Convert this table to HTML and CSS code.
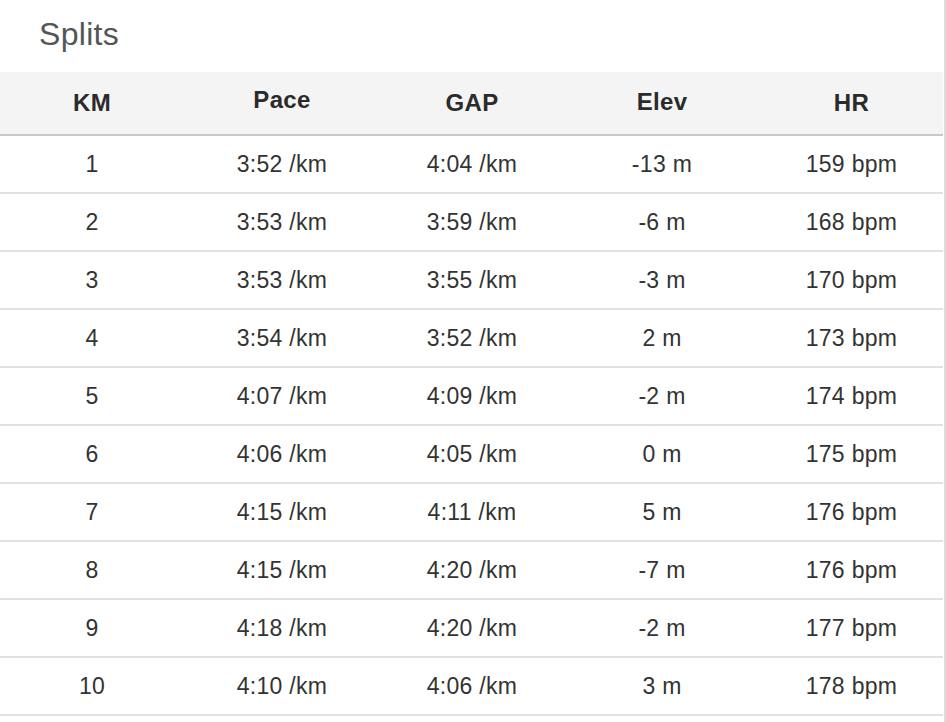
FILE: index.html
```html
<!DOCTYPE html>
<html>
<head>
<meta charset="utf-8">
<title>Splits</title>
<link rel="stylesheet" href="styles.css">
</head>
<body>
<div class="panel">
  <h2 class="title">Splits</h2>
  <table class="splits">
    <colgroup>
      <col class="c-km"><col class="c-pace"><col class="c-gap"><col class="c-elev"><col class="c-hr">
    </colgroup>
    <thead>
      <tr><th>KM</th><th><span class="lift">Pace</span></th><th>GAP</th><th><span class="lift-sm">Elev</span></th><th>HR</th></tr>
    </thead>
    <tbody>
      <tr><td>1</td><td>3:52 /km</td><td>4:04 /km</td><td>-13 m</td><td>159 bpm</td></tr>
      <tr><td>2</td><td>3:53 /km</td><td>3:59 /km</td><td>-6 m</td><td>168 bpm</td></tr>
      <tr><td>3</td><td>3:53 /km</td><td>3:55 /km</td><td>-3 m</td><td>170 bpm</td></tr>
      <tr><td>4</td><td>3:54 /km</td><td>3:52 /km</td><td>2 m</td><td>173 bpm</td></tr>
      <tr><td>5</td><td>4:07 /km</td><td>4:09 /km</td><td>-2 m</td><td>174 bpm</td></tr>
      <tr><td>6</td><td>4:06 /km</td><td>4:05 /km</td><td>0 m</td><td>175 bpm</td></tr>
      <tr><td>7</td><td>4:15 /km</td><td>4:11 /km</td><td>5 m</td><td>176 bpm</td></tr>
      <tr><td>8</td><td>4:15 /km</td><td>4:20 /km</td><td>-7 m</td><td>176 bpm</td></tr>
      <tr><td>9</td><td>4:18 /km</td><td>4:20 /km</td><td>-2 m</td><td>177 bpm</td></tr>
      <tr><td>10</td><td>4:10 /km</td><td>4:06 /km</td><td>3 m</td><td>178 bpm</td></tr>
    </tbody>
  </table>
</div>
</body>
</html>
```

FILE: styles.css
```css
html, body {
  margin: 0;
  padding: 0;
  background: #ffffff;
}

body {
  font-family: "Liberation Sans", Arial, Helvetica, sans-serif;
  color: #333333;
}

.panel {
  width: 944px;
  border-right: 2px solid #dcdcdc;
  min-height: 722px;
}

.title {
  margin: 0;
  padding: 18px 0 22px 39px;
  font-size: 32px;
  line-height: 32px;
  font-weight: normal;
  color: #555555;
  letter-spacing: 0.3px;
}

.splits {
  width: 943px;
  table-layout: fixed;
  border-collapse: collapse;
  font-size: 23px;
  letter-spacing: 0.3px;
}

.c-km { width: 184px; }
.c-pace { width: 196px; }
.c-gap { width: 184px; }
.c-elev { width: 196px; }
.c-hr { width: 183px; }

.splits th,
.splits td {
  text-align: center;
  padding: 0;
}

.splits thead tr {
  background: #f4f4f4;
  border-bottom: 2px solid #c9c9c9;
}

.splits th {
  height: 62px;
  font-size: 24px;
  font-weight: bold;
  color: #2b2b2b;
  line-height: 24px;
  vertical-align: middle;
}

.lift {
  display: inline-block;
  margin-bottom: 6px;
}

.lift-sm {
  display: inline-block;
  margin-bottom: 3px;
}

.splits tbody tr {
  border-bottom: 2px solid #e2e2e2;
}

.splits td {
  height: 56px;
  line-height: 23px;
  vertical-align: middle;
}
```
